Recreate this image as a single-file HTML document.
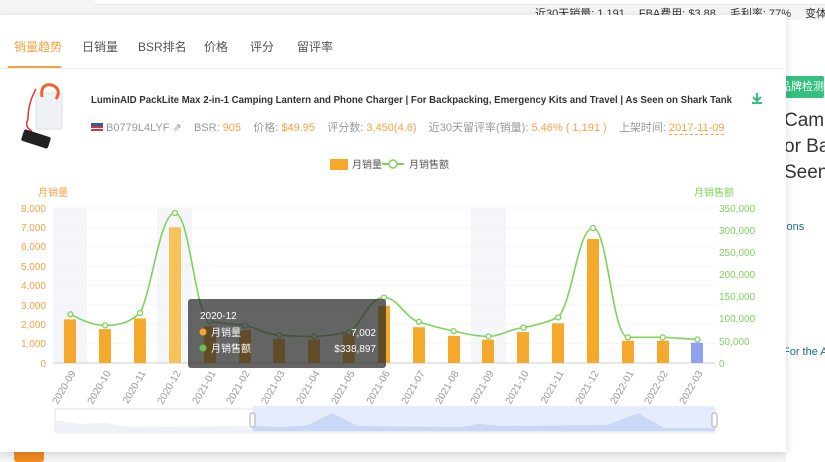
<!DOCTYPE html>
<html><head><meta charset="utf-8"><style>
*{margin:0;padding:0;box-sizing:border-box}
body{width:825px;height:462px;overflow:hidden;background:#fff;font-family:"Liberation Sans","Noto Sans CJK SC",sans-serif;position:relative}
.bg{position:absolute;left:0;top:0;width:825px;height:462px;background:#f4f5f7}
.topline{position:absolute;left:95px;top:0;width:730px;height:5px;background:#fff;border-bottom:1px solid #e5e5e5}
.stats{position:absolute;left:535px;top:5px;font-size:11px;color:#333;white-space:nowrap}
.stats span{margin-right:14px}
.right{position:absolute;left:786px;top:20px;width:60px;height:442px;background:#fff;white-space:nowrap}
.panel{position:absolute;left:0;top:15px;width:786px;height:437px;background:#fff;box-shadow:0 2px 8px rgba(0,0,0,.15)}
.tabs{position:absolute;left:0;top:0;width:786px;height:54px;border-bottom:1px solid #eee}
.tab{position:absolute;top:23px;font-size:12px;color:#555}
.ul{position:absolute;left:8px;top:51px;width:53px;height:2px;background:#f5a244}
.meta{position:absolute;left:91px;top:104px;font-size:11px;color:#999;white-space:nowrap}
.meta b{font-weight:normal;color:#f5a244}
</style></head><body>
<div class="bg"></div>
<div class="topline"></div>
<div class="stats"><span>近30天销量: 1,191</span><span>FBA费用: $3.88</span><span>毛利率: 77%</span><span>变体数: 1</span></div>
<div class="right">
<div style="position:absolute;left:-8px;top:56px;width:46px;height:22px;background:#35c07f;color:#fff;font-size:11px;line-height:22px;border-radius:2px;padding-left:2px">品牌检测</div>
<div style="position:absolute;left:-2px;top:88px;font-size:19px;color:#333;line-height:26px">Camp<br>or Bac<br>Seen</div>
<div style="position:absolute;left:-5px;top:201px;font-size:11px;color:#1a6b8a">tions</div>
<div style="position:absolute;left:-3px;top:326px;font-size:11px;color:#1a6b8a">For the A</div>
</div>
<div style="position:absolute;left:14px;top:446px;width:30px;height:16px;background:#f08a24;border-radius:3px"></div>
<div class="panel">
<div class="tabs">
<div class="tab" style="left:14px;color:#f5a244">销量趋势</div>
<div class="tab" style="left:82px">日销量</div>
<div class="tab" style="left:138px">BSR排名</div>
<div class="tab" style="left:204px">价格</div>
<div class="tab" style="left:250px">评分</div>
<div class="tab" style="left:297px">留评率</div>
<div class="ul"></div>
</div>
<svg style="position:absolute;left:14px;top:68px" width="60" height="70" viewBox="0 0 60 70">
<rect x="22" y="10" width="26" height="36" fill="#eef2f6" stroke="#dde3ea"/>
<path d="M28 14 Q26 0 38 2 Q48 6 42 16" stroke="#f06030" stroke-width="3" fill="none"/>
<path d="M22 6 Q14 20 14 36 Q10 44 18 48" stroke="#e33" stroke-width="1.5" fill="none"/>
<rect x="8" y="50" width="28" height="12" rx="2" fill="#222" transform="rotate(18 22 56)"/>
</svg>
<div class="meta"><span style="display:inline-block;width:12px;height:8px;background:linear-gradient(#3b5998 0 45%,#d33 45% 60%,#fff 60% 75%,#d33 75%)"></span> B0779L4LYF ⇗ &nbsp;&nbsp; BSR: <b>905</b> &nbsp;&nbsp; 价格: <b>$49.95</b> &nbsp;&nbsp; 评分数: <b>3,450(4.6)</b> &nbsp;&nbsp; 近30天留评率(销量): <b>5.46% ( 1,191 )</b> &nbsp;&nbsp; 上架时间: <b style="border-bottom:1px dashed #f5a244">2017-11-09</b></div>
</div>
<svg style="position:absolute;left:0;top:0" width="825" height="462" font-family="Liberation Sans, Noto Sans CJK SC, sans-serif">
<text x="91" y="103" font-size="10.5" font-weight="bold" fill="#333" textLength="641" lengthAdjust="spacingAndGlyphs">LuminAID PackLite Max 2-in-1 Camping Lantern and Phone Charger | For Backpacking, Emergency Kits and Travel | As Seen on Shark Tank</text>
<path d="M757 93 V100 M753 97 L757 101 L761 97 M752 103 H762" stroke="#35c07f" stroke-width="2" fill="none"/>
<rect x="330" y="159" width="18" height="11" fill="#f5a92c"/>
<text x="352" y="168" font-size="10" fill="#555">月销量</text>
<line x1="382" y1="164" x2="404" y2="164" stroke="#7ed35b" stroke-width="2"/><circle cx="393" cy="164" r="4" fill="#fff" stroke="#7ed35b" stroke-width="1.5"/>
<text x="409" y="168" font-size="10" fill="#555">月销售额</text>
<text x="38" y="196" font-size="10" fill="#f5a244">月销量</text>
<text x="694" y="196" font-size="10" fill="#7ed35b">月销售额</text>
<rect x="53" y="208" width="34" height="155" fill="#f4f6fa"/>
<rect x="157" y="208" width="35" height="155" fill="#f4f6fa"/>
<rect x="471" y="208" width="35" height="155" fill="#f4f6fa"/>
<g stroke="#eee" stroke-dasharray="2,2">
<line x1="53" y1="208" x2="715" y2="208"/><line x1="53" y1="227.4" x2="715" y2="227.4"/><line x1="53" y1="246.7" x2="715" y2="246.7"/><line x1="53" y1="266" x2="715" y2="266"/><line x1="53" y1="285.5" x2="715" y2="285.5"/><line x1="53" y1="305" x2="715" y2="305"/><line x1="53" y1="324" x2="715" y2="324"/><line x1="53" y1="343.6" x2="715" y2="343.6"/>
</g>
<line x1="53" y1="363" x2="715" y2="363" stroke="#ccc"/>
<g font-size="10" fill="#f5a244" text-anchor="end">
<text x="46" y="212">8,000</text><text x="46" y="231">7,000</text><text x="46" y="250">6,000</text><text x="46" y="270">5,000</text><text x="46" y="289">4,000</text><text x="46" y="309">3,000</text><text x="46" y="328">2,000</text><text x="46" y="347">1,000</text><text x="46" y="367">0</text>
</g>
<g font-size="10" fill="#7ed35b">
<text x="719" y="212">350,000</text><text x="719" y="234">300,000</text><text x="719" y="256">250,000</text><text x="719" y="278">200,000</text><text x="719" y="300">150,000</text><text x="719" y="322">100,000</text><text x="719" y="345">50,000</text><text x="719" y="367">0</text>
</g>
<g fill="#f5a92c">
<rect x="64" y="319.4" width="12" height="43.6"/><rect x="99" y="329.1" width="12" height="33.9"/><rect x="134" y="318.4" width="12" height="44.6"/><rect x="169" y="227.3" width="12" height="135.7" fill="#f6c35a"/><rect x="204" y="326.2" width="12" height="36.8"/><rect x="239" y="330.1" width="12" height="32.9"/><rect x="273" y="338.8" width="12" height="24.2"/><rect x="308" y="339.7" width="12" height="23.3"/><rect x="343" y="333.9" width="12" height="29.1"/><rect x="378" y="305.8" width="12" height="57.2"/><rect x="413" y="327.2" width="12" height="35.8"/><rect x="448" y="335.9" width="12" height="27.1"/><rect x="482" y="339.7" width="12" height="23.3"/><rect x="517" y="332" width="12" height="31"/><rect x="552" y="323.3" width="12" height="39.7"/><rect x="587" y="239" width="12" height="124"/><rect x="622" y="340.7" width="12" height="22.3"/><rect x="657" y="340.7" width="12" height="22.3"/><rect x="691" y="342.7" width="12" height="20.3" fill="#8fa2f0"/>
</g>
<path d="M70.4 314.3 C85 322,95 325.4,105.2 325.4 C120 325.4,130 322,140.1 313 C152 290,160 213,174.9 213 C190 213,195 318,209.8 321 C225 324,235 324,244.6 325.4 C258 328,266 335,279.4 335.1 C293 336,305 337,314.3 336.4 C330 336,338 334,349.1 332 C362 325,368 297.5,384 297.5 C398 297.5,405 318,418.8 321.8 C432 326,443 329,453.6 331.1 C466 334,478 336.4,488.5 336.4 C500 336.4,510 329,523.3 327.6 C538 325,548 322,558.2 317.4 C573 300,578 228,593 228 C608 228,612 337,627.8 337.3 L662.7 337.3 C675 337.5,688 339,697.5 339.5" fill="none" stroke="#7ed35b" stroke-width="1.6"/>
<g fill="#fff" stroke="#7ed35b" stroke-width="1.3">
<circle cx="70.4" cy="314.3" r="2.5"/><circle cx="105.2" cy="325.4" r="2.5"/><circle cx="140.1" cy="313" r="2.5"/><circle cx="174.9" cy="213" r="2.5"/><circle cx="209.8" cy="321" r="2.5"/><circle cx="244.6" cy="325.4" r="2.5"/><circle cx="279.4" cy="335.1" r="2.5"/><circle cx="314.3" cy="336.4" r="2.5"/><circle cx="349.1" cy="332" r="2.5"/><circle cx="384" cy="297.5" r="2.5"/><circle cx="418.8" cy="321.8" r="2.5"/><circle cx="453.6" cy="331.1" r="2.5"/><circle cx="488.5" cy="336.4" r="2.5"/><circle cx="523.3" cy="327.6" r="2.5"/><circle cx="558.2" cy="317.4" r="2.5"/><circle cx="593" cy="228" r="2.5"/><circle cx="627.8" cy="337.3" r="2.5"/><circle cx="662.7" cy="337.3" r="2.5"/><circle cx="697.5" cy="339.5" r="2.5"/>
</g>
<g font-size="10" fill="#999">
<text transform="translate(76,373) rotate(-60)" text-anchor="end">2020-09</text><text transform="translate(111,373) rotate(-60)" text-anchor="end">2020-10</text><text transform="translate(146,373) rotate(-60)" text-anchor="end">2020-11</text><text transform="translate(181,373) rotate(-60)" text-anchor="end">2020-12</text><text transform="translate(216,373) rotate(-60)" text-anchor="end">2021-01</text><text transform="translate(250,373) rotate(-60)" text-anchor="end">2021-02</text><text transform="translate(285,373) rotate(-60)" text-anchor="end">2021-03</text><text transform="translate(320,373) rotate(-60)" text-anchor="end">2021-04</text><text transform="translate(355,373) rotate(-60)" text-anchor="end">2021-05</text><text transform="translate(390,373) rotate(-60)" text-anchor="end">2021-06</text><text transform="translate(425,373) rotate(-60)" text-anchor="end">2021-07</text><text transform="translate(459,373) rotate(-60)" text-anchor="end">2021-08</text><text transform="translate(494,373) rotate(-60)" text-anchor="end">2021-09</text><text transform="translate(529,373) rotate(-60)" text-anchor="end">2021-10</text><text transform="translate(564,373) rotate(-60)" text-anchor="end">2021-11</text><text transform="translate(599,373) rotate(-60)" text-anchor="end">2021-12</text><text transform="translate(634,373) rotate(-60)" text-anchor="end">2022-01</text><text transform="translate(668,373) rotate(-60)" text-anchor="end">2022-02</text><text transform="translate(703,373) rotate(-60)" text-anchor="end">2022-03</text>
</g>
<rect x="55" y="409" width="660" height="23" fill="#fff" stroke="#dde4f2"/>
<path d="M55 420 L80 424 L105 423 L130 427 L253 426 L253 431 L55 431Z" fill="#eef1f8"/>
<rect x="253" y="406" width="462" height="26" fill="#dfe8fb" opacity=".8"/>
<path d="M253 426 L285 427 L308 425 L332 413 L358 426 L460 427 L480 424 L500 426 L608 425 L638 413 L664 428 L715 428 L715 431 L253 431Z" fill="#c9d8f7"/>
<rect x="250" y="413" width="5" height="14" rx="2" fill="#fff" stroke="#aab"/>
<rect x="712" y="413" width="5" height="14" rx="2" fill="#fff" stroke="#aab"/>
<rect x="188" y="299" width="198" height="69" rx="3" fill="rgba(40,40,40,.72)"/>
<text x="200" y="319" font-size="10" fill="#fff">2020-12</text>
<circle cx="203" cy="332" r="3.5" fill="#f5a92c"/><text x="211" y="336" font-size="10" fill="#fff">月销量</text><text x="376" y="336" font-size="10" fill="#fff" text-anchor="end">7,002</text>
<circle cx="203" cy="348" r="3.5" fill="#6cc04a"/><text x="211" y="352" font-size="10" fill="#fff">月销售额</text><text x="376" y="352" font-size="10" fill="#fff" text-anchor="end">$338,897</text>
</svg>
</body></html>
